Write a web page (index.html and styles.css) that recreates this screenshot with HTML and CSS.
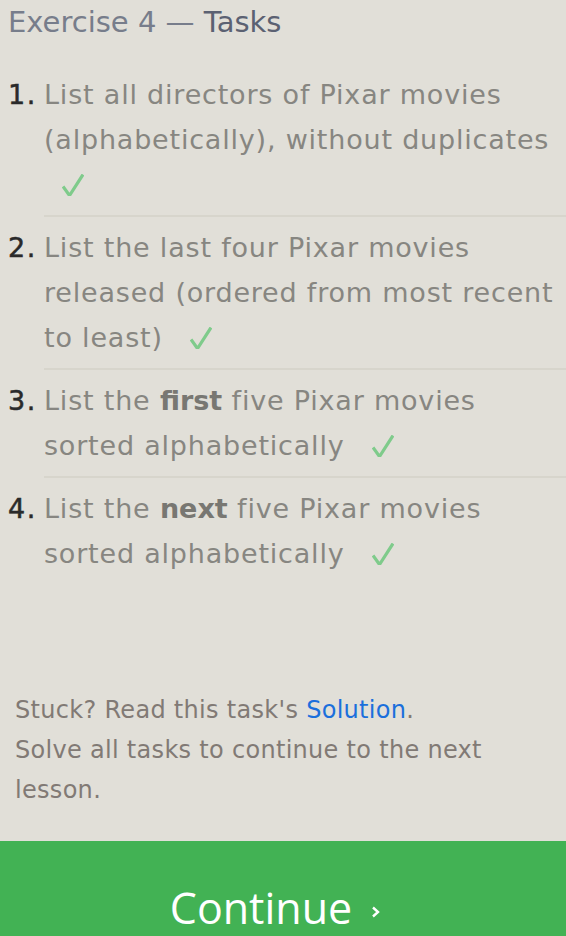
FILE: index.html
```html
<!DOCTYPE html>
<html>
<head>
<meta charset="utf-8">
<link rel="stylesheet" href="styles.css">
</head>
<body>
<div class="page">
  <h2 class="title"><span class="ex">Exercise 4 — </span><span class="tasks">Tasks</span></h2>
  <ol class="task-list">
    <li><span class="num">1.</span><div class="task">List all directors of Pixar movies (alphabetically), without duplicates <svg class="check" viewBox="0 0 22 22" width="22" height="22"><path d="M1 12.5 L7.5 21.5 L21 0.5" fill="none" stroke="#7fcb8b" stroke-width="3.2" stroke-linejoin="miter"/></svg></div></li>
    <li><span class="num">2.</span><div class="task">List the last four Pixar movies released (ordered from most recent to least) <svg class="check" viewBox="0 0 22 22" width="22" height="22"><path d="M1 12.5 L7.5 21.5 L21 0.5" fill="none" stroke="#7fcb8b" stroke-width="3.2" stroke-linejoin="miter"/></svg></div></li>
    <li><span class="num">3.</span><div class="task">List the <b>first</b> five Pixar movies sorted alphabetically <svg class="check" viewBox="0 0 22 22" width="22" height="22"><path d="M1 12.5 L7.5 21.5 L21 0.5" fill="none" stroke="#7fcb8b" stroke-width="3.2" stroke-linejoin="miter"/></svg></div></li>
    <li><span class="num">4.</span><div class="task">List the <b>next</b> five Pixar movies sorted alphabetically <svg class="check" viewBox="0 0 22 22" width="22" height="22"><path d="M1 12.5 L7.5 21.5 L21 0.5" fill="none" stroke="#7fcb8b" stroke-width="3.2" stroke-linejoin="miter"/></svg></div></li>
  </ol>
  <div class="footer">
    <p>Stuck? Read this task's <a href="#">Solution</a>.</p>
    <p>Solve all tasks to continue to the next lesson.</p>
  </div>
  <div class="continue"><span class="label">Continue</span><svg class="chev" viewBox="0 0 8 12" width="8" height="12"><path d="M1 1.5 L6 6 L1 10.5" fill="none" stroke="#fff" stroke-width="2.4"/></svg></div>
</div>
</body>
</html>
```

FILE: styles.css
```css
html, body {
  margin: 0;
  padding: 0;
  background: #e1dfd8;
}
body {
  font-family: "DejaVu Sans", sans-serif;
  width: 566px;
  height: 936px;
  overflow: hidden;
}
.page {
  display: flex;
  flex-direction: column;
  height: 936px;
}
.title {
  margin: 0;
  padding: 2px 0 0 8px;
  font-size: 29px;
  font-weight: normal;
  line-height: 40px;
  color: #777d8b;
}
.title .tasks {
  color: #5b6172;
}
.task-list {
  list-style: none;
  margin: 30px 0 0 0;
  padding: 0;
}
.task-list li {
  display: flex;
  font-size: 27px;
  line-height: 45px;
  letter-spacing: 0.8px;
}
.num {
  width: 36px;
  flex: none;
  padding-left: 8px;
  color: #2a2a2a;
  letter-spacing: 1.5px;
  -webkit-text-stroke: 0.5px #2a2a2a;
}
.task {
  flex: 1;
  color: #878681;
  padding-right: 8px;
  padding-bottom: 8px;
  margin-bottom: 8px;
  border-bottom: 2px solid #d7d5cc;
}
.task-list li:last-child .task {
  border-bottom: none;
}
.task b {
  color: #787772;
  letter-spacing: 0;
}
.check {
  display: inline-block;
  margin-left: 18px;
  vertical-align: -2px;
}
.footer {
  margin-top: auto;
  padding: 0 15px 31px;
  font-size: 24px;
  line-height: 40px;
  letter-spacing: 0.3px;
  color: #817a75;
}
.footer p {
  margin: 0;
}
.footer a {
  color: #1b6fdc;
  text-decoration: none;
}
.continue {
  height: 95px;
  flex: none;
  box-sizing: border-box;
  padding-top: 42px;
  background: #42b254;
  color: #fff;
  display: flex;
  align-items: flex-start;
  justify-content: center;
  overflow: hidden;
}
.label {
  font-family: "Open Sans", sans-serif;
  font-size: 43px;
  line-height: 50px;
}
.chev {
  margin: 23px 16px 0 20px;
}
```
